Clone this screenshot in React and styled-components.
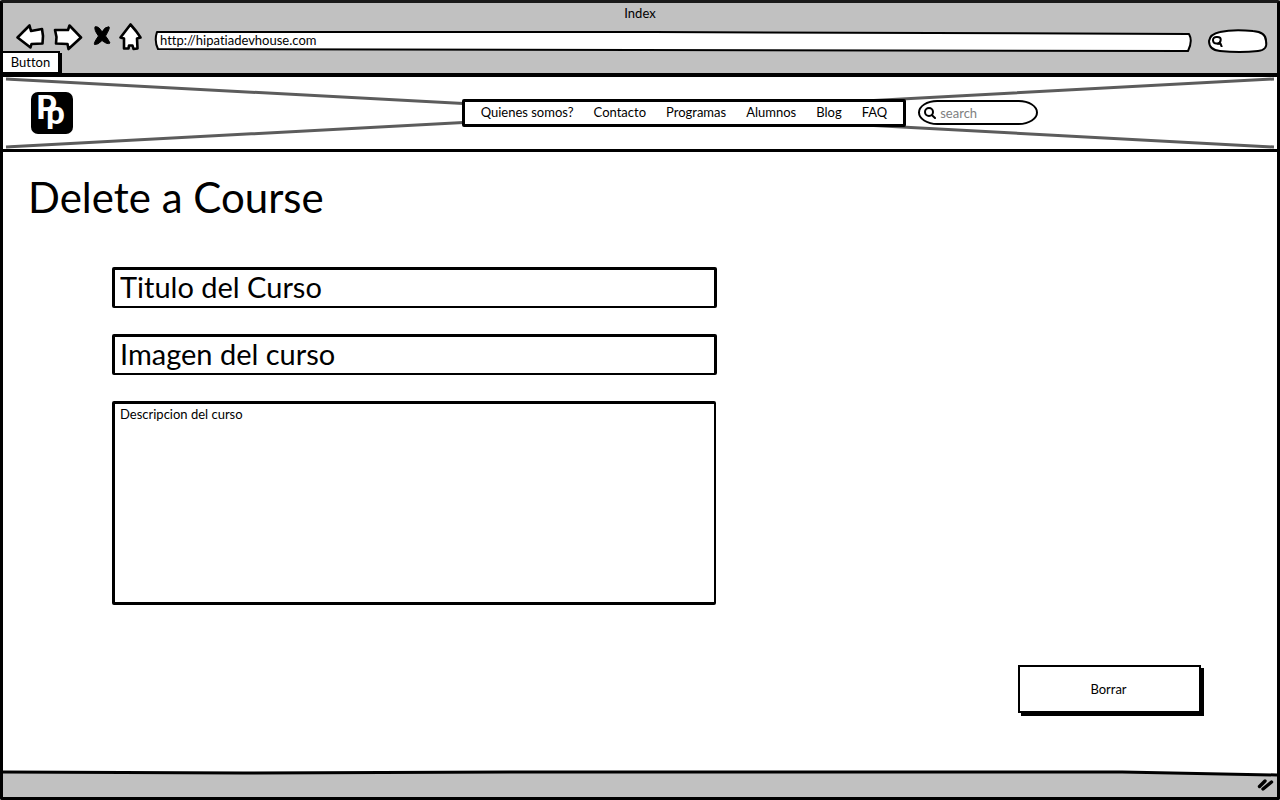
import React from "react";
import styled, { createGlobalStyle } from "styled-components";

const GlobalStyle = createGlobalStyle`
  * { box-sizing: border-box; }
  body {
    margin: 0;
    background: #fff;
    color: #000;
    font: 13px/16px Lato, "Liberation Sans", sans-serif;
    font-variant-ligatures: none;
  }
  button, input, textarea { font: inherit; color: inherit; font-variant-ligatures: none; }
`;

const Window = styled.div`
  display: flex;
  flex-direction: column;
  min-height: 100vh;
  border: 3px solid #000;
  border-top-color: #1a1a1a;
  border-radius: 2px;
`;

const Chrome = styled.header`
  background: #c1c1c1;
  border-bottom: 4px solid #000;
`;

const WindowTitle = styled.div`
  padding-top: 2px;
  height: 20px;
  text-align: center;
`;

const Toolbar = styled.div`
  display: flex;
  align-items: center;
  height: 28px;
  padding: 0 9px 0 13px;
`;

const NavButton = styled.button`
  display: block;
  flex: none;
  height: 28px;
  padding: 0;
  border: 0;
  background: none;
  margin-right: ${(p) => p.$gap}px;
  svg { display: block; overflow: visible; }
`;

const Sketch = styled.svg`
  position: absolute;
  inset: 0;
  width: 100%;
  height: 100%;
  overflow: visible;
  pointer-events: none;
  path {
    fill: ${(p) => p.$fill || "none"};
    stroke: ${(p) => p.$stroke || "#000"};
    stroke-width: ${(p) => p.$width || 3}px;
    stroke-linejoin: round;
    vector-effect: non-scaling-stroke;
  }
`;

const AddressBar = styled.div`
  position: relative;
  flex: 1;
  height: 20px;
  margin: 8px 16px 0 12px;
`;

const BareInput = styled.input`
  position: relative;
  display: block;
  flex: 1;
  width: 100%;
  min-width: 0;
  height: 18px;
  padding: 0 6px 0 ${(p) => p.$start || 6}px;
  border: 0;
  background: transparent;
  outline: none;
`;

const ChromeSearch = styled.label`
  position: relative;
  display: flex;
  flex: none;
  align-items: center;
  width: 60px;
  height: 24px;
  margin-top: 8px;
  padding-left: 4px;
`;

const IconSlot = styled.span`
  position: relative;
  flex: none;
  svg { display: block; }
`;

const TabButton = styled.button`
  display: block;
  width: 57px;
  height: 22px;
  padding: 0 0 2px;
  border: 2px solid #000;
  border-left: 0;
  border-bottom-width: 1px;
  background: #fff;
  box-shadow: 2px 2px 0 #000;
`;

const Banner = styled.div`
  position: relative;
  display: grid;
  grid-template-columns: 36% auto auto 1fr;
  align-items: center;
  height: 76px;
  margin-top: -1px;
  border-bottom: 3px solid #000;
`;

const Brand = styled.a`
  position: relative;
  justify-self: start;
  margin-left: 28px;
  svg { display: block; overflow: visible; }
`;

const Menu = styled.nav`
  position: relative;
  display: flex;
  gap: 20px;
  height: 28px;
  padding: 2px 16px;
  border: 3px solid #000;
  border-radius: 2px;
  background: #fff;
  a { color: #000; text-decoration: none; white-space: nowrap; }
`;

const SearchBox = styled.label`
  position: relative;
  display: flex;
  align-items: center;
  width: 120px;
  height: 25px;
  margin-left: 12px;
  padding-left: 4px;
  border: 2px solid #000;
  border-radius: 20px / 13px;
  background: #fff;
  input::placeholder { color: #808080; opacity: 1; }
`;

const Main = styled.main`
  flex: 1;
  padding: 20px 76px 20px 25px;
`;

const Heading = styled.h1`
  margin: 0;
  font-size: 42px;
  line-height: 50px;
  font-weight: 400;
`;

const Form = styled.form`
  display: flex;
  flex-direction: column;
  gap: 26px;
  padding: 45px 0 0 84px;
`;

const Field = styled.input`
  width: 100%;
  max-width: 605px;
  height: 41px;
  padding: 0 5px 4px;
  border: 3px solid #000;
  border-bottom-width: 2px;
  border-radius: 2px;
  font-size: 29px;
  &::placeholder { color: #000; opacity: 1; }
`;

const Description = styled.textarea`
  display: block;
  width: 100%;
  max-width: 604px;
  height: 204px;
  padding: 2px 5px;
  border: 3px solid #000;
  border-right-width: 2px;
  border-radius: 2px;
  resize: none;
  &::placeholder { color: #000; opacity: 1; }
`;

const DeleteButton = styled.button`
  align-self: flex-end;
  width: 183px;
  height: 48px;
  margin-top: 34px;
  padding: 0 2px 0 0;
  border: 2px solid #000;
  background: #fff;
  box-shadow: 3px 3px 0 #000;
`;

const StatusBar = styled.footer`
  position: relative;
  display: flex;
  justify-content: flex-end;
  align-items: center;
  height: 26px;
  padding-right: 3px;
`;

function Magnifier() {
  return (
    <svg width="12" height="12" viewBox="0 0 12 12" fill="none" stroke="#000" strokeWidth="2" strokeLinecap="round">
      <circle cx="5" cy="5" r="4" />
      <path d="M8 8.2 11 11" />
    </svg>
  );
}

function RoughMagnifier() {
  return (
    <svg width="12" height="12" viewBox="0 0 12 12" fill="none" stroke="#000" strokeWidth="2" strokeLinecap="round">
      <path d="M1 5.5C0.8 3 2.5 1.8 4.8 2 8 1.8 9 3.2 8.6 5.5 8.2 8 6.6 8.8 4.6 8.6 2.4 8.6 1.2 7.6 1 5.5Z" />
      <path d="M6 8.5 8.6 9 9.6 11.4" />
    </svg>
  );
}

const icons = [
  { name: "Back", w: 28, gap: 10, fill: "#fff", d: "M1.5 14.5 13.5 2.5 15 8 26 6 27 13 26.5 20.5 15.5 21 14.5 24.5Z" },
  { name: "Forward", w: 28, gap: 11, fill: "#fff", d: "M1 7 14 7 15.5 2.5 27 14.5 14.5 26 13.5 21 2 20.5 2.5 14Z" },
  { name: "Stop", w: 18, gap: 8, fill: "#000", d: "M2 3.8Q6 3 9 9 12 3.5 16 3.8 17.5 4.5 12.5 13 15 16 17 20 14.5 22 9 17.5 5 22 1.5 21.5 0.5 20 5.5 13 1 7 2 3.8Z" },
  { name: "Home", w: 23, gap: 0, fill: "#fff", d: "M11.5 1.5 1.5 14.5 5 15.5 5 25.5 9.5 25.5 10 22.5 13.5 22.5 14.5 26 18.5 25.5 18 15.5 21.5 14.5Q17 7.5 11.5 1.5Z" },
];

const links = ["Quienes somos?", "Contacto", "Programas", "Alumnos", "Blog", "FAQ"];

export default function App() {
  return (
    <>
      <GlobalStyle />
      <Window>
        <Chrome>
          <WindowTitle>Index</WindowTitle>
          <Toolbar>
            {icons.map((icon) => (
              <NavButton key={icon.name} type="button" aria-label={icon.name} $gap={icon.gap}>
                <svg width={icon.w} height="28" viewBox={`0 0 ${icon.w} 28`}>
                  <path
                    d={icon.d}
                    fill={icon.fill}
                    stroke="#000"
                    strokeWidth={icon.name === "Stop" ? 1 : 2.6}
                    strokeLinejoin="round"
                  />
                </svg>
              </NavButton>
            ))}
            <AddressBar>
              <Sketch $fill="#fff" $width={2} viewBox="0 0 1040 20" preserveAspectRatio="none" aria-hidden="true">
                <path d="M3 1 500 1 1037 3Q1041 10 1036 20L4 18Q0 10 3 1Z" />
              </Sketch>
              <BareInput aria-label="Address" defaultValue="http://hipatiadevhouse.com" />
            </AddressBar>
            <ChromeSearch>
              <Sketch $fill="#fff" $width={2} viewBox="0 0 60 24" preserveAspectRatio="none" aria-hidden="true">
                <path d="M12 3Q25 0 45 2 58 3 58 12 60 21 50 22 32 24 12 22 1 21 1 12 2 5 12 3Z" />
              </Sketch>
              <IconSlot><RoughMagnifier /></IconSlot>
              <BareInput aria-label="Web search" />
            </ChromeSearch>
          </Toolbar>
          <TabButton type="button">Button</TabButton>
        </Chrome>

        <Banner>
          <Sketch $stroke="#5c5c5c" viewBox="0 0 1275 74" preserveAspectRatio="none" aria-hidden="true">
            <path d="M3 3 1272 72M3 72 1272 3" />
          </Sketch>
          <Brand href="#" aria-label="Home page">
            <svg width="42" height="42" viewBox="0 0 42 42" fontFamily="Lato, sans-serif" fontWeight="900" fontSize="33" fill="#fff">
              <rect width="42" height="42" rx="7" fill="#000" />
              <text x="5" y="27">
                P<tspan x="15" y="32">p</tspan>
              </text>
            </svg>
          </Brand>
          <Menu>
            {links.map((link) => (
              <a key={link} href="#">{link}</a>
            ))}
          </Menu>
          <SearchBox>
            <IconSlot><Magnifier /></IconSlot>
            <BareInput aria-label="Search" placeholder="search" $start={4} />
          </SearchBox>
        </Banner>

        <Main>
          <Heading>Delete a Course</Heading>
          <Form onSubmit={(e) => e.preventDefault()}>
            <Field aria-label="Titulo del Curso" placeholder="Titulo del Curso" />
            <Field aria-label="Imagen del curso" placeholder="Imagen del curso" />
            <Description aria-label="Descripcion del curso" placeholder="Descripcion del curso" />
            <DeleteButton type="submit">Borrar</DeleteButton>
          </Form>
        </Main>

        <StatusBar>
          <Sketch viewBox="0 0 1275 26" preserveAspectRatio="none" aria-hidden="true">
            <polygon points="0,1 240,2 530,1 1120,1 1275,4 1275,26 0,26" fill="#c1c1c1" />
            <path d="M0 1 240 2 530 1 1120 1 1275 4" />
          </Sketch>
          <IconSlot>
            <svg width="17" height="14" viewBox="0 0 17 14" stroke="#000" strokeWidth="3.4" strokeLinecap="round" aria-hidden="true">
              <path d="M2.5 9.5 8 4M6 12 14.5 5" />
            </svg>
          </IconSlot>
        </StatusBar>
      </Window>
    </>
  );
}
